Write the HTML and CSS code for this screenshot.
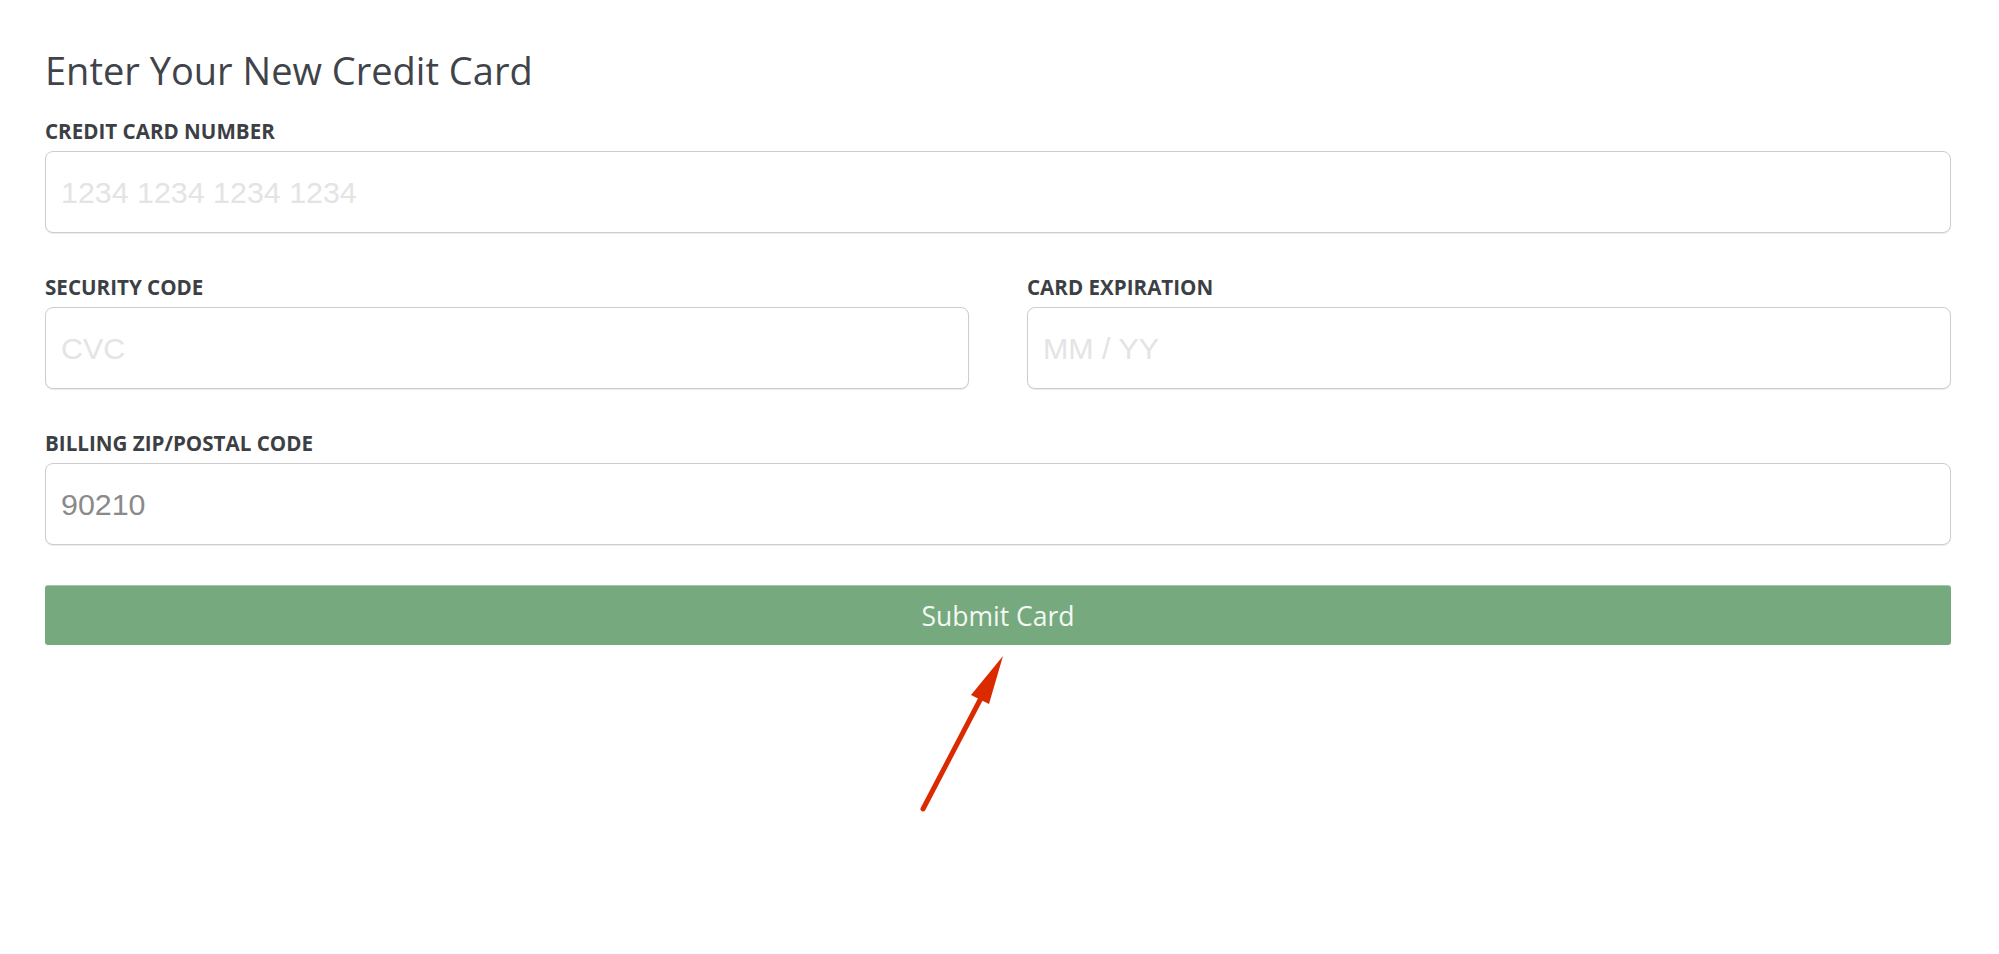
FILE: index.html
```html
<!DOCTYPE html>
<html lang="en">
<head>
    <meta charset="UTF-8">
    <meta name="viewport" content="width=device-width, initial-scale=1.0">
    <title>New Credit Card</title>
    <link rel="stylesheet" href="styles.css">
</head>
<body>
    <div class="pagina">
        <h1 class="titulo">Enter Your New Credit Card</h1>
        <form class="formulario" onsubmit="return false">
            <div class="campo">
                <label class="etiqueta" for="numero">Credit Card Number</label>
                <input class="entrada" id="numero" type="text" placeholder="1234 1234 1234 1234">
            </div>
            <div class="fila">
                <div class="campo">
                    <label class="etiqueta" for="cvc">Security Code</label>
                    <input class="entrada" id="cvc" type="text" placeholder="CVC">
                </div>
                <div class="campo">
                    <label class="etiqueta" for="expira">Card Expiration</label>
                    <input class="entrada" id="expira" type="text" placeholder="MM / YY">
                </div>
            </div>
            <div class="campo">
                <label class="etiqueta" for="postal">Billing Zip/Postal Code</label>
                <input class="entrada" id="postal" type="text" value="90210">
            </div>
            <button class="enviar" type="submit">Submit Card</button>
        </form>
        <!-- flecha roja señalando el botón -->
        <svg class="flecha" width="120" height="190" viewBox="0 0 120 190">
            <line x1="23" y1="169" x2="80" y2="60" stroke="#dc2a00" stroke-width="5" stroke-linecap="round"/>
            <polygon points="103,16 71,55 89,64" fill="#dc2a00"/>
        </svg>
    </div>
</body>
</html>
```

FILE: styles.css
```css
body {
    margin: 0;
    background: #ffffff;
    font-family: "Open Sans", "Liberation Sans", sans-serif;
}
.pagina {
    position: relative;
    padding: 47px 48px 0 45px;
    height: 954px;
    box-sizing: border-box;
}
.titulo {
    margin: 0 0 26px;
    font-size: 38px;
    line-height: 46px;
    font-weight: 400;
    color: #40444a;
}
.formulario {
    display: flex;
    flex-direction: column;
}
.fila {
    display: grid;
    grid-template-columns: 1fr 1fr;
    gap: 58px;
    margin-bottom: 42px;
}
.campo {
    display: flex;
    flex-direction: column;
    gap: 8px;
    margin-bottom: 42px;
}
.fila .campo {
    margin-bottom: 0;
}
.etiqueta {
    font-size: 20.6px;
    line-height: 24px;
    font-weight: 700;
    text-transform: uppercase;
    color: #3c3f44;
}
.entrada {
    height: 82px;
    box-sizing: border-box;
    border: 1px solid #cdcdcd;
    border-radius: 8px;
    box-shadow: 0 1px 1px rgba(0, 0, 0, 0.08);
    padding: 0 15px;
    font-family: "Liberation Sans", Arial, sans-serif;
    font-size: 30.4px;
    color: #8a8a8a;
    outline: none;
}
.entrada::placeholder {
    color: #e4e4e4;
}
.enviar {
    margin-top: -2px;
    height: 60px;
    border: none;
    border-top: 1px solid #a6c7ab;
    border-radius: 3px;
    background: #77a97e;
    color: #f4f7f4;
    font-family: "Open Sans", sans-serif;
    font-size: 26.5px;
    cursor: pointer;
}
.flecha {
    position: absolute;
    left: 900px;
    top: 640px;
}
```
